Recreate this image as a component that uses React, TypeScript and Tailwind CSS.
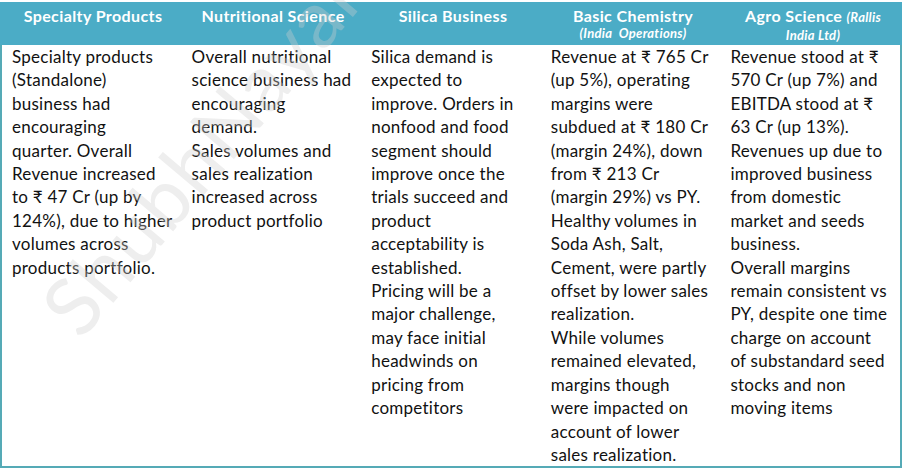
const columns = [
  {
    title: "Specialty Products",
    lines: [
      "Specialty products",
      "(Standalone)",
      "business had",
      "encouraging",
      "quarter. Overall",
      "Revenue increased",
      "to ₹ 47 Cr (up by",
      "124%), due to higher",
      "volumes across",
      "products portfolio.",
    ],
  },
  {
    title: "Nutritional Science",
    lines: [
      "Overall nutritional",
      "science business had",
      "encouraging",
      "demand.",
      "Sales volumes and",
      "sales realization",
      "increased across",
      "product portfolio",
    ],
  },
  {
    title: "Silica Business",
    lines: [
      "Silica demand is",
      "expected to",
      "improve. Orders in",
      "nonfood and food",
      "segment should",
      "improve once the",
      "trials succeed and",
      "product",
      "acceptability is",
      "established.",
      "Pricing will be a",
      "major challenge,",
      "may face initial",
      "headwinds on",
      "pricing from",
      "competitors",
    ],
  },
  {
    title: "Basic Chemistry",
    lines: [
      "Revenue at ₹ 765 Cr",
      "(up 5%), operating",
      "margins were",
      "subdued at ₹ 180 Cr",
      "(margin 24%), down",
      "from ₹ 213 Cr",
      "(margin 29%) vs PY.",
      "Healthy volumes in",
      "Soda Ash, Salt,",
      "Cement, were partly",
      "offset by lower sales",
      "realization.",
      "While volumes",
      "remained elevated,",
      "margins though",
      "were impacted on",
      "account of lower",
      "sales realization.",
    ],
  },
  {
    title: "Agro Science",
    lines: [
      "Revenue stood at ₹",
      "570 Cr (up 7%) and",
      "EBITDA stood at ₹",
      "63 Cr (up 13%).",
      "Revenues up due to",
      "improved business",
      "from domestic",
      "market and seeds",
      "business.",
      "Overall margins",
      "remain consistent vs",
      "PY, despite one time",
      "charge on account",
      "of substandard seed",
      "stocks and non",
      "moving items",
    ],
  },
];

function HeaderCell({ index, title }: { index: number; title: string }) {
  if (index === 3) {
    return (
      <div className="flex w-[180px] flex-col items-center pl-[6px] pt-[4px]">
        <span className="text-[16px] leading-[19px] font-bold tracking-[0.4px]">{title}</span>
        <span className="text-[13px] leading-[16px] font-bold italic tracking-[0.3px]">(India&nbsp;&nbsp;Operations)</span>
      </div>
    );
  }
  if (index === 4) {
    return (
      <div className="flex w-[180px] flex-col items-center pl-[6px] pt-[4px]">
        <span className="text-[16px] leading-[19px] font-bold tracking-[0.4px]">
          {title} <span className="text-[13px] italic tracking-[0.3px]">(Rallis</span>
        </span>
        <span className="text-[13px] leading-[16px] font-bold italic tracking-[0.3px]">India Ltd)</span>
      </div>
    );
  }
  return (
    <div className="flex w-[180px] justify-center pl-[6px] pt-[4px]">
      <span className="text-[16px] leading-[19px] font-bold tracking-[0.4px]">{title}</span>
    </div>
  );
}

export default function App() {
  return (
    <div
      className="relative h-[471px] w-[906px] overflow-hidden bg-white pt-[2px]"
      style={{ fontFamily: "Lato, 'Noto Sans', sans-serif" }}
    >
      <div className="w-[902px]">
        <div className="flex h-[43px] bg-[#4bacc6] text-white">
          {columns.map((c, i) => (
            <HeaderCell key={c.title} index={i} title={c.title} />
          ))}
        </div>
        <div className="flex h-[423px] border-x-2 border-b-2 border-[#55aab6] text-[17px] leading-[23.4px] tracking-[0.25px] text-[#111]">
          {columns.map((c, i) => (
            <div key={c.title} className={`flex w-[180px] flex-col pl-[10px] ${i === 0 ? "w-[178px]" : ""}`}>
              {c.lines.map((l, j) => (
                <span key={j} className="whitespace-nowrap">
                  {l}
                </span>
              ))}
            </div>
          ))}
        </div>
      </div>

      {/* faint watermark */}
      <div
        aria-hidden="true"
        className="pointer-events-none absolute left-[-25px] top-[105px] -rotate-[50deg] text-[80px] leading-none tracking-[2px] text-[#cfcfcf] opacity-35 select-none"
      >
        ShubhNayak
      </div>
    </div>
  );
}
